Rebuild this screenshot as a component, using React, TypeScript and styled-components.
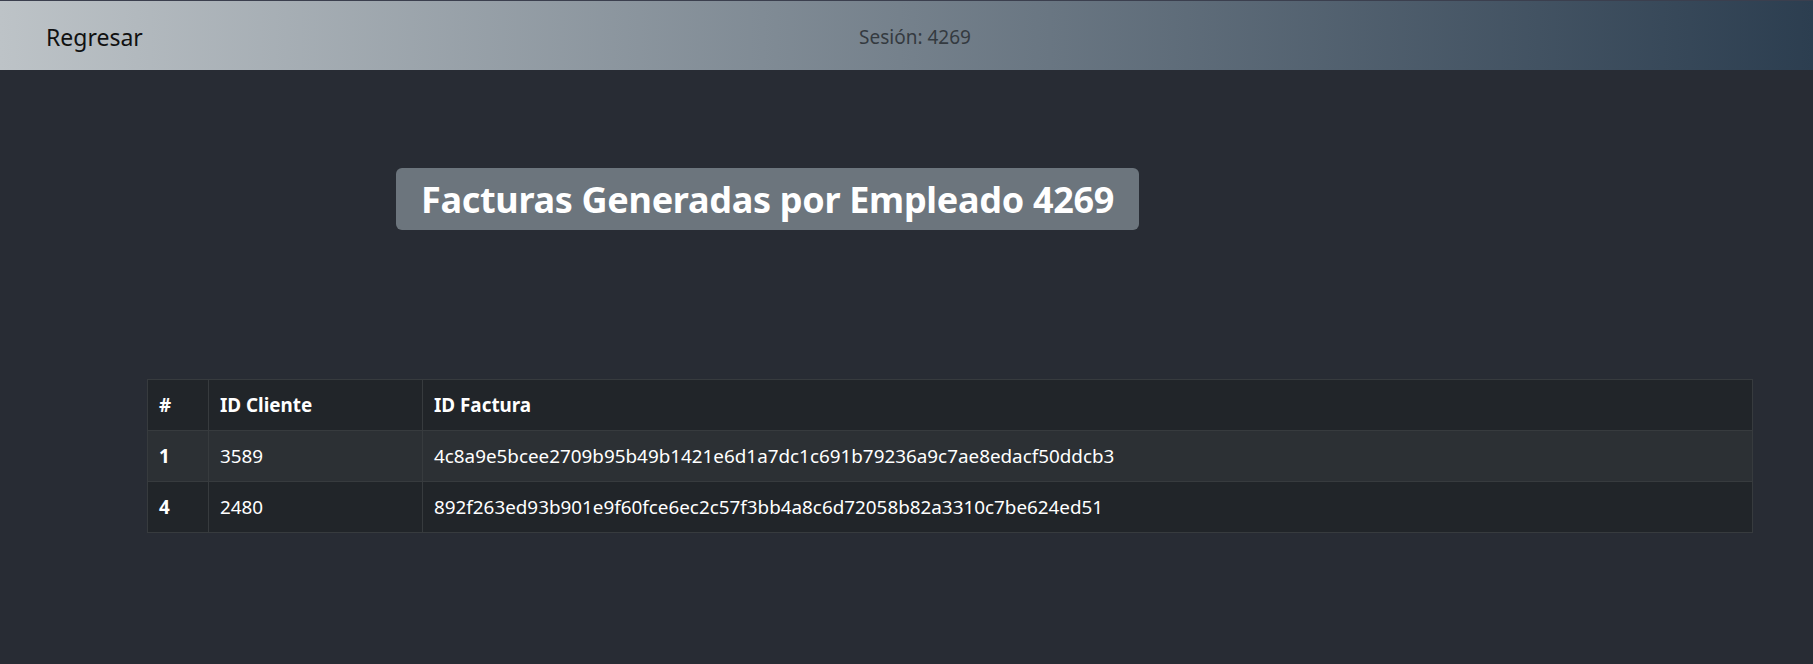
import React from "react";
import styled, { createGlobalStyle } from "styled-components";

interface IFactura {
  num: number;
  cliente: string;
  factura: string;
}

interface ICellProps {
  width?: string;
  bold?: boolean;
}

interface IRowProps {
  striped?: boolean;
}

const facturas: IFactura[] = [
  {
    num: 1,
    cliente: "3589",
    factura: "4c8a9e5bcee2709b95b49b1421e6d1a7dc1c691b79236a9c7ae8edacf50ddcb3",
  },
  {
    num: 4,
    cliente: "2480",
    factura: "892f263ed93b901e9f60fce6ec2c57f3bb4a8c6d72058b82a3310c7be624ed51",
  },
];

const GlobalStyle = createGlobalStyle`
  html, body {
    margin: 0;
    padding: 0;
    background: #282c34;
    font-family: "Noto Sans", "Open Sans", sans-serif;
  }
  #root {
    min-height: 664px;
    background: #282c34;
  }
`;

const Page = styled.div`
  min-height: 664px;
  background: #282c34;
  border-top: 1px solid #3b3f4e;
`;

const Navbar = styled.nav`
  box-sizing: border-box;
  height: 69px;
  display: grid;
  grid-template-columns: 813px auto 1fr;
  align-items: center;
  padding: 2px 0 0 46px;
  background: linear-gradient(to right, #bdc3c7, #2c3e50);
`;

const Brand = styled.a`
  font-size: 23px;
  color: #111;
  text-decoration: none;
  cursor: pointer;
`;

const Session = styled.span`
  font-size: 19px;
  color: #343a40;
`;

const Content = styled.main`
  display: flex;
  flex-direction: column;
  padding: 98px 60px 0 147px;
`;

const TitleRow = styled.div`
  display: flex;
  padding-left: 249px;
`;

const Title = styled.h2`
  margin: 0;
  height: 62px;
  display: flex;
  align-items: center;
  padding: 0 25px;
  background: #6c757d;
  border-radius: 6px;
  color: #fff;
  font-size: 36px;
  font-weight: 700;
  letter-spacing: -0.3px;
`;

const Table = styled.table`
  margin-top: 149px;
  width: 100%;
  border-collapse: collapse;
  color: #fff;
  font-size: 18.85px;
  border: 1px solid #373b3e;
`;

const Row = styled.tr`
  height: 51px;
  background: ${(props: IRowProps) => (props.striped ? "#2c3034" : "#212529")};
  border-bottom: 1px solid #373b3e;
`;

const HeadCell = styled.th`
  text-align: left;
  padding: 0 11px;
  font-weight: 700;
  border-right: 1px solid #373b3e;
  width: ${(props: ICellProps) => props.width || "auto"};
`;

const Cell = styled.td`
  padding: 0 11px;
  border-right: 1px solid #373b3e;
  font-weight: ${(props: ICellProps) => (props.bold ? 700 : 400)};
`;

const App = () => {
  return (
    <Page>
      <GlobalStyle />
      <Navbar>
        <Brand>Regresar</Brand>
        <Session>Sesión: 4269</Session>
      </Navbar>
      <Content>
        <TitleRow>
          <Title>Facturas Generadas por Empleado 4269</Title>
        </TitleRow>
        <Table>
          <thead>
            <Row>
              <HeadCell width="38px">#</HeadCell>
              <HeadCell width="191px">ID Cliente</HeadCell>
              <HeadCell>ID Factura</HeadCell>
            </Row>
          </thead>
          <tbody>
            {facturas.map((f, i) => (
              <Row key={f.factura} striped={i % 2 === 0}>
                <Cell bold>{f.num}</Cell>
                <Cell>{f.cliente}</Cell>
                <Cell>{f.factura}</Cell>
              </Row>
            ))}
          </tbody>
        </Table>
      </Content>
    </Page>
  );
};

export default App;
